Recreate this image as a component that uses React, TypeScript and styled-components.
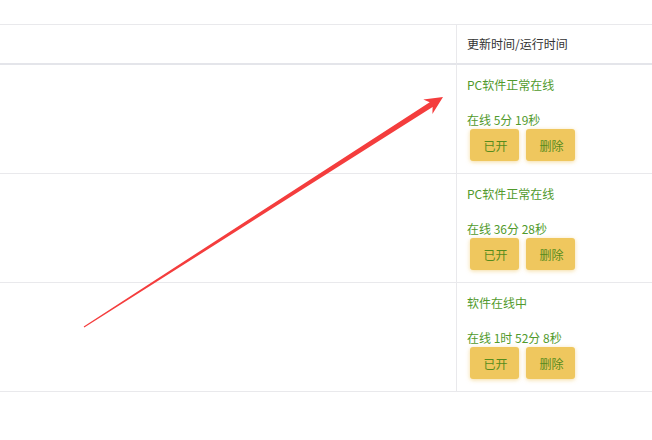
import React from "react";
import styled, { createGlobalStyle } from "styled-components";

const GlobalStyle = createGlobalStyle`
  html, body {
    margin: 0;
    padding: 0;
    background: #ffffff;
  }
  body {
    font-family: "Noto Sans CJK SC", "Noto Sans", sans-serif;
    font-size: 12px;
    color: #333333;
  }
`;

const Page = styled.div`
  position: relative;
  width: 652px;
  height: 440px;
  padding-top: 24px;
  box-sizing: border-box;
  overflow: hidden;
`;

const Table = styled.div`
  display: grid;
  grid-template-columns: 457px 1fr;
  border-top: 1px solid #e9e9ec;
`;

const Cell = styled.div<{ $head?: boolean; $side?: boolean }>`
  box-sizing: border-box;
  border-bottom: ${({ $head }) => ($head ? "2px solid #e4e5ea" : "1px solid #e9e9ec")};
  border-right: ${({ $side }) => ($side ? "1px solid #e9e9ec" : "none")};
  height: ${({ $head }) => ($head ? "40px" : "109px")};
`;

const HeadText = styled.div`
  padding: 0 10px;
  line-height: 38px;
  font-size: 12px;
  color: #333333;
`;

const StatusCell = styled.div`
  padding: 11px 10px 0 10px;
  color: #519a2c;
  font-size: 12px;
`;

const Line = styled.div<{ $gap?: number }>`
  line-height: 18px;
  margin-top: ${({ $gap }) => $gap ?? 0}px;
  white-space: nowrap;
`;

const Buttons = styled.div`
  display: flex;
  gap: 7px;
  padding-left: 3px;
`;

const Button = styled.button`
  width: 49px;
  height: 32px;
  border: none;
  border-radius: 3px;
  background: #efc75e;
  color: #578c1c;
  font-family: "Noto Sans CJK SC", "Noto Sans", sans-serif;
  font-size: 12px;
  box-shadow: 0 1px 4px rgba(236, 190, 80, 0.55);
  padding: 0 0 0 2px;
  cursor: pointer;
`;

const Arrow = styled.svg`
  position: absolute;
  left: 0;
  top: 0;
  pointer-events: none;
`;

const rows = [
  { status: "PC软件正常在线", online: "在线 5分 19秒" },
  { status: "PC软件正常在线", online: "在线 36分 28秒" },
  { status: "软件在线中", online: "在线 1时 52分 8秒" },
];

export default function App() {
  return (
    <>
      <GlobalStyle />
      <Page>
        <Table>
          <Cell $head $side />
          <Cell $head>
            <HeadText>更新时间/运行时间</HeadText>
          </Cell>
          {rows.map((r, i) => (
            <React.Fragment key={i}>
              <Cell $side />
              <Cell>
                <StatusCell>
                  <Line>{r.status}</Line>
                  <Line $gap={17}>{r.online}</Line>
                  <Buttons>
                    <Button>已开</Button>
                    <Button>删除</Button>
                  </Buttons>
                </StatusCell>
              </Cell>
            </React.Fragment>
          ))}
        </Table>
        <Arrow width="652" height="440" viewBox="0 0 652 440">
          <polygon
            fill="#f43d3d"
            points="84.3,327.6 432.6,106.9 432.4,113.9 443,97 423.3,99.6 429.7,102.2 83.7,326.4"
          />
        </Arrow>
      </Page>
    </>
  );
}
